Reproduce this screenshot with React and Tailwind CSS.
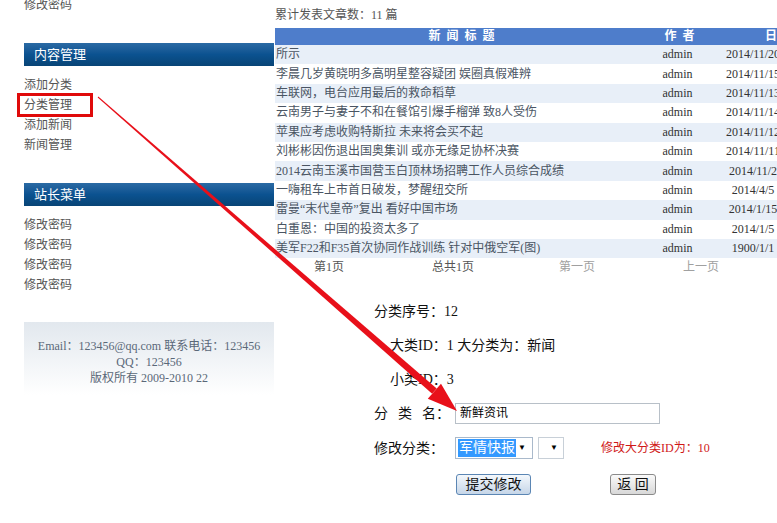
import React from 'react';

const rows = [
  ['所示', '2014/11/20'],
  ['李晨几岁黄晓明多高明星整容疑团 娱圈真假难辨', '2014/11/15'],
  ['车联网，电台应用最后的救命稻草', '2014/11/13'],
  ['云南男子与妻子不和在餐馆引爆手榴弹 致8人受伤', '2014/11/14'],
  ['苹果应考虑收购特斯拉 未来将会买不起', '2014/11/12'],
  ['刘彬彬因伤退出国奥集训 或亦无缘足协杯决赛', '2014/11/11'],
  ['2014云南玉溪市国营玉白顶林场招聘工作人员综合成绩', '2014/11/2'],
  ['一嗨租车上市首日破发，梦醒纽交所', '2014/4/5'],
  ['雷曼“末代皇帝”复出 看好中国市场', '2014/1/15'],
  ['白重恩：中国的投资太多了', '2014/1/5'],
  ['美军F22和F35首次协同作战训练 针对中俄空军(图)', '1900/1/1'],
];

const SideHeader = ({ title }) => (
  <div className="h-[23px] bg-gradient-to-b from-[#2a6aa4] via-[#0b5290] to-[#084476] text-white text-[13px] leading-[23px] pl-[10px]">
    {title}
  </div>
);

const Spaced = ({ chars, className }) => (
  <div className={`flex gap-[6px] ${className}`}>
    {chars.map((c) => (
      <span key={c}>{c}</span>
    ))}
  </div>
);

const Arrow = () => (
  <svg className="absolute left-0 top-0 pointer-events-none" width="777" height="523">
    <polygon points="97.7,97.4 98.3,96.6 436.7,388.6 432.1,393.8" fill="#e8101a" />
    <polygon points="457,411 427.8,398.7 441,383.7" fill="#e8101a" />
  </svg>
);

export default function App() {
  return (
    <div className="relative w-[777px] h-[523px] overflow-hidden bg-white [font-family:'Liberation_Serif','Noto_Sans_CJK_SC',serif]">
      <div className="flex">
        {/* sidebar */}
        <div className="ml-[24px] w-[250px] shrink-0">
          <div className="-mt-[5px] text-[12px] leading-[20px] text-[#555]">修改密码</div>
          <div className="mt-[28px]">
            <SideHeader title="内容管理" />
          </div>
          <div className="mt-[9px] text-[12px] leading-[20px] text-[#555]">
            <div>添加分类</div>
            <div>分类管理</div>
            <div>添加新闻</div>
            <div>新闻管理</div>
          </div>
          <div className="mt-[28px]">
            <SideHeader title="站长菜单" />
          </div>
          <div className="mt-[9px] text-[12px] leading-[20px] text-[#555]">
            <div>修改密码</div>
            <div>修改密码</div>
            <div>修改密码</div>
            <div>修改密码</div>
          </div>
          <div className="mt-[27px] h-[73px] pt-[16px] bg-gradient-to-b from-[#e2e8ee] to-white text-center text-[12px] leading-[16px] text-[#5a6878]">
            <div>Email：123456@qq.com 联系电话：123456</div>
            <div>QQ：123456</div>
            <div>版权所有 2009-2010 22</div>
          </div>
        </div>

        {/* main */}
        <div className="ml-[1px] w-[520px] shrink-0">
          <div className="mt-[5px] text-[12px] leading-[20px] text-[#555]">累计发表文章数：11 篇</div>
          <div className="mt-[3px]">
            <div className="flex h-[17px] bg-[#4e7dcb] text-white font-bold text-[12px] leading-[17px]">
              <Spaced chars={['新', '闻', '标', '题']} className="w-[365px] justify-center pl-[8px]" />
              <Spaced chars={['作', '者']} className="w-[75px] justify-center pl-[4px]" />
              <Spaced chars={['日', '期']} className="w-[80px] pl-[50px]" />
            </div>
            {rows.map((r, i) => (
              <div
                key={i}
                className={`flex h-[19.4px] items-center text-[12px] leading-[19px] ${i % 2 === 0 ? 'bg-[#e8eff8]' : 'bg-white'}`}
              >
                <div className="w-[365px] pl-[1px] whitespace-nowrap text-[#4a5563]">{r[0]}</div>
                <div className="w-[75px] text-center text-[#333]">admin</div>
                <div className="w-[76px] text-center text-[#333] whitespace-nowrap">{r[1]}</div>
              </div>
            ))}
            <div className="flex h-[19px] -ml-[8px] text-[12px] leading-[19px]">
              <div className="w-[124px] text-center text-[#555]">第1页</div>
              <div className="w-[124px] text-center text-[#555]">总共1页</div>
              <div className="w-[124px] text-center text-[#a0a0a0]">第一页</div>
              <div className="w-[124px] text-center text-[#a0a0a0]">上一页</div>
            </div>
          </div>

          {/* form */}
          <div className="mt-[17px] pl-[99px] text-[14px] text-[#111]">
            <div className="h-[34px] flex items-center">分类序号：12</div>
            <div className="h-[34px] flex items-center pl-[16px]">大类ID：1 大分类为：新闻</div>
            <div className="h-[34px] flex items-center pl-[16px]">小类ID：3</div>
            <div className="h-[34px] flex items-center">
              <div className="w-[81px] flex gap-[10px]">
                <span>分</span>
                <span>类</span>
                <span>名：</span>
              </div>
              <div className="w-[205px] h-[21px] border border-[#b8c0c8] text-[12px] leading-[19px] pl-[4px] text-black">
                新鲜资讯
              </div>
            </div>
            <div className="h-[36px] flex items-center">
              <div className="w-[81px]">修改分类：</div>
              <div className="w-[78px] h-[22px] border border-[#a9b9cb] flex items-center pl-[2px]">
                <span className="bg-[#3399ff] text-white text-[14px] leading-[18px] px-[1px]">军情快报</span>
                <span className="ml-auto mr-[6px] text-[8px] text-black">▼</span>
              </div>
              <div className="ml-[5px] w-[26px] h-[22px] border border-[#c8d0d8] flex items-center justify-end pr-[5px]">
                <span className="text-[8px] text-black">▼</span>
              </div>
              <div className="ml-[37px] text-[12px] text-[#d01818]">修改大分类ID为：10</div>
            </div>
            <div className="mt-[8px] flex">
              <div className="ml-[82px] w-[75px] h-[21px] rounded-[3px] border border-[#5b86b4] bg-gradient-to-b from-[#f4f8fc] to-[#c6d6e8] text-center text-[14px] leading-[19px]">
                提交修改
              </div>
              <div className="ml-[79px] w-[46px] h-[21px] rounded-[3px] border border-[#8a8a8a] bg-gradient-to-b from-[#fafafa] to-[#d8d8d8] text-center text-[14px] leading-[19px]">
                返 回
              </div>
            </div>
          </div>
        </div>
      </div>

      {/* annotation */}
      <div className="absolute left-[17px] top-[93px] w-[76px] h-[24px] border-[3px] border-[#e00a0a]" />
      <Arrow />
    </div>
  );
}
